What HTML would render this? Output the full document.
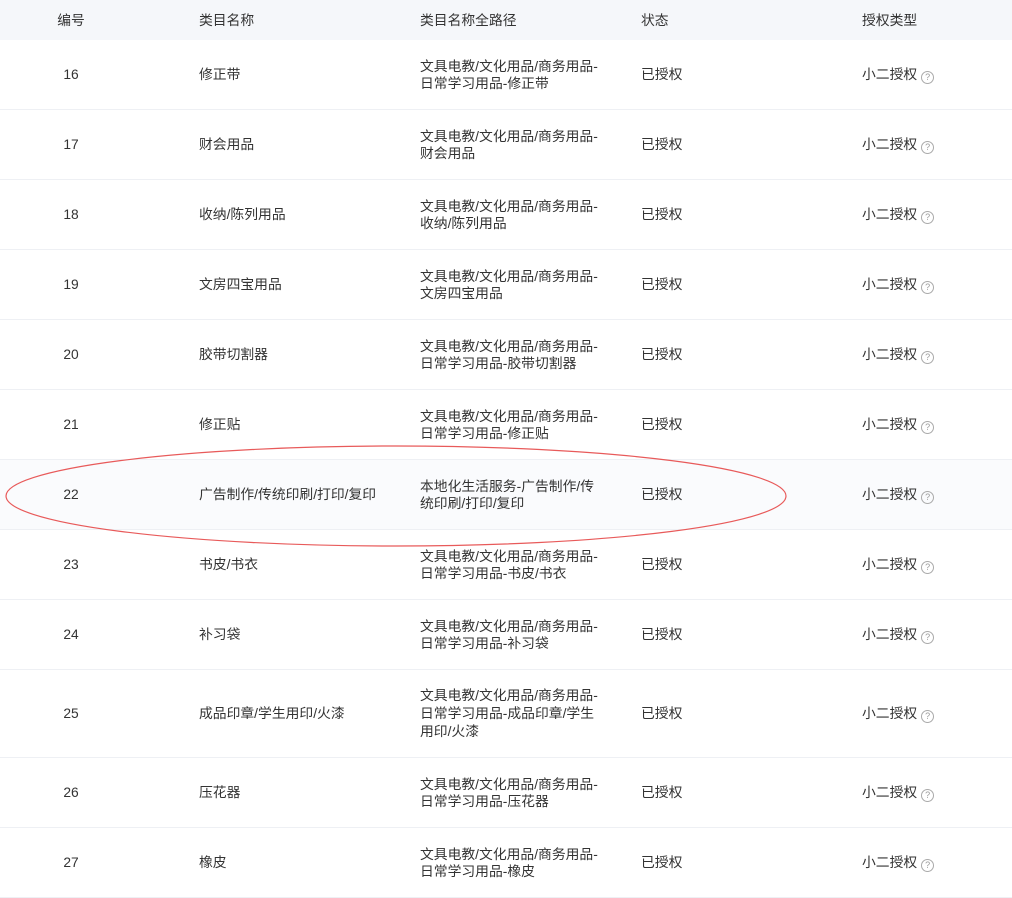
<!DOCTYPE html>
<html><head><meta charset="utf-8"><style>
*{margin:0;padding:0;box-sizing:border-box}
body{width:1012px;height:874px;overflow:hidden;background:#fff;font-family:"Liberation Sans","Noto Sans CJK SC",sans-serif;font-size:13.8px;color:#333;position:relative}
.r{position:absolute;left:0;width:1012px;border-bottom:1px solid #eef0f4;display:flex;align-items:center}
.r div{position:absolute;line-height:17px}
.c1{left:0;width:142px;text-align:center}
.c2{left:199px}.c3{left:420px}.c4{left:641px}.c5{left:862px}
.h{top:0;height:40px;background:#f5f7fa;border-bottom:none}
.hl{background:#fafbfd}
.q{display:inline-block;width:13px;height:13px;border:1px solid #aaa;border-radius:50%;font-size:9px;line-height:11px;text-align:center;color:#999;vertical-align:-1px;margin-left:4px}
</style></head><body>
<div class="r h"><div class="c1">编号</div><div class="c2">类目名称</div><div class="c3">类目名称全路径</div><div class="c4">状态</div><div class="c5">授权类型</div></div>

<div class="r" style="top:40px;height:70px"><div class="c1">16</div><div class="c2">修正带</div><div class="c3">文具电教/文化用品/商务用品-<br>日常学习用品-修正带</div><div class="c4">已授权</div><div class="c5">小二授权<span class="q">?</span></div></div>
<div class="r" style="top:110px;height:70px"><div class="c1">17</div><div class="c2">财会用品</div><div class="c3">文具电教/文化用品/商务用品-<br>财会用品</div><div class="c4">已授权</div><div class="c5">小二授权<span class="q">?</span></div></div>
<div class="r" style="top:180px;height:70px"><div class="c1">18</div><div class="c2">收纳/陈列用品</div><div class="c3">文具电教/文化用品/商务用品-<br>收纳/陈列用品</div><div class="c4">已授权</div><div class="c5">小二授权<span class="q">?</span></div></div>
<div class="r" style="top:250px;height:70px"><div class="c1">19</div><div class="c2">文房四宝用品</div><div class="c3">文具电教/文化用品/商务用品-<br>文房四宝用品</div><div class="c4">已授权</div><div class="c5">小二授权<span class="q">?</span></div></div>
<div class="r" style="top:320px;height:70px"><div class="c1">20</div><div class="c2">胶带切割器</div><div class="c3">文具电教/文化用品/商务用品-<br>日常学习用品-胶带切割器</div><div class="c4">已授权</div><div class="c5">小二授权<span class="q">?</span></div></div>
<div class="r" style="top:390px;height:70px"><div class="c1">21</div><div class="c2">修正贴</div><div class="c3">文具电教/文化用品/商务用品-<br>日常学习用品-修正贴</div><div class="c4">已授权</div><div class="c5">小二授权<span class="q">?</span></div></div>
<div class="r hl" style="top:460px;height:70px"><div class="c1">22</div><div class="c2">广告制作/传统印刷/打印/复印</div><div class="c3">本地化生活服务-广告制作/传<br>统印刷/打印/复印</div><div class="c4">已授权</div><div class="c5">小二授权<span class="q">?</span></div></div>
<div class="r" style="top:530px;height:70px"><div class="c1">23</div><div class="c2">书皮/书衣</div><div class="c3">文具电教/文化用品/商务用品-<br>日常学习用品-书皮/书衣</div><div class="c4">已授权</div><div class="c5">小二授权<span class="q">?</span></div></div>
<div class="r" style="top:600px;height:70px"><div class="c1">24</div><div class="c2">补习袋</div><div class="c3">文具电教/文化用品/商务用品-<br>日常学习用品-补习袋</div><div class="c4">已授权</div><div class="c5">小二授权<span class="q">?</span></div></div>
<div class="r" style="top:670px;height:88px"><div class="c1">25</div><div class="c2">成品印章/学生用印/火漆</div><div class="c3" style="line-height:18px">文具电教/文化用品/商务用品-<br>日常学习用品-成品印章/学生<br>用印/火漆</div><div class="c4">已授权</div><div class="c5">小二授权<span class="q">?</span></div></div>
<div class="r" style="top:758px;height:70px"><div class="c1">26</div><div class="c2">压花器</div><div class="c3">文具电教/文化用品/商务用品-<br>日常学习用品-压花器</div><div class="c4">已授权</div><div class="c5">小二授权<span class="q">?</span></div></div>
<div class="r" style="top:828px;height:70px"><div class="c1">27</div><div class="c2">橡皮</div><div class="c3">文具电教/文化用品/商务用品-<br>日常学习用品-橡皮</div><div class="c4">已授权</div><div class="c5">小二授权<span class="q">?</span></div></div>

<svg style="position:absolute;left:0;top:0" width="1012" height="874"><ellipse cx="396" cy="496" rx="390" ry="50" fill="none" stroke="#e85a5a" stroke-width="1.2"/></svg>
</body></html>
